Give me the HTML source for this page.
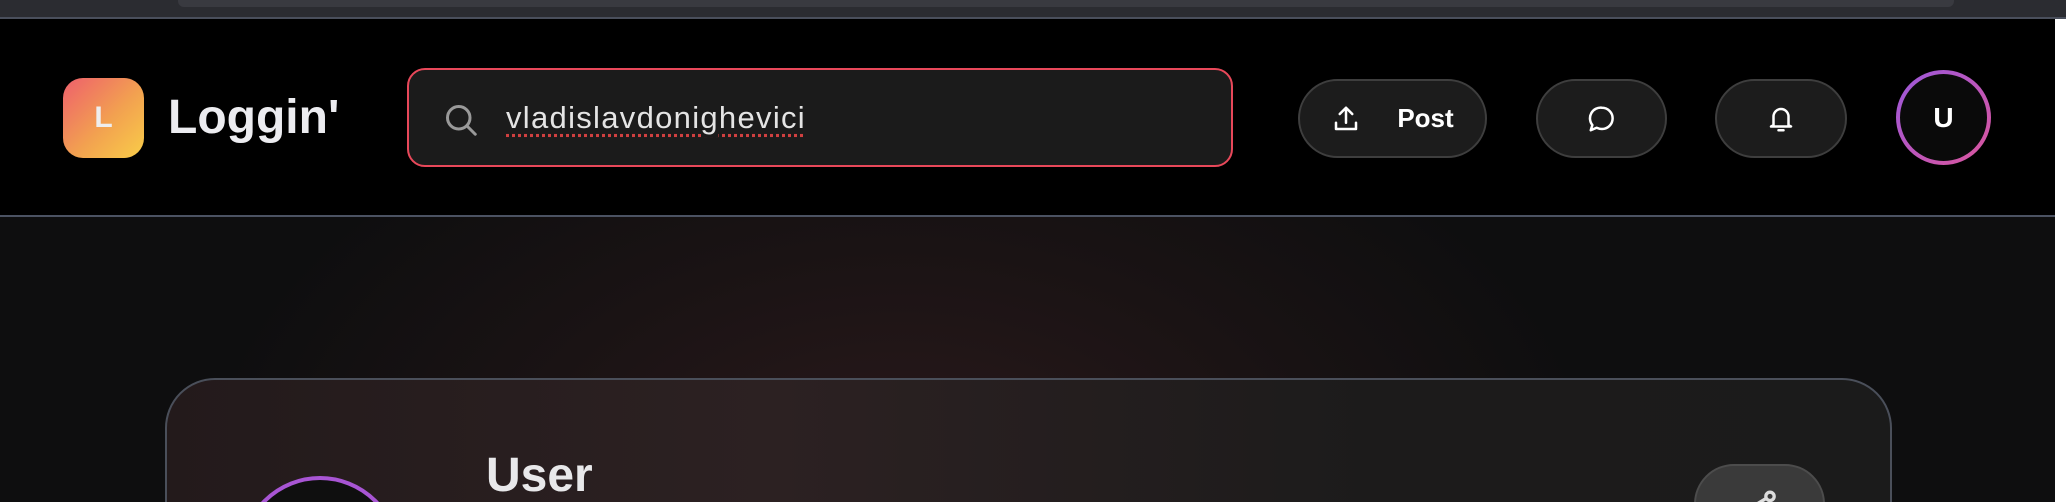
<!DOCTYPE html>
<html style="overflow:hidden;width:2066px;height:502px"><head><meta charset="utf-8"><style>
*{margin:0;padding:0;box-sizing:border-box}
body{width:2066px;height:502px;overflow:hidden;background:#0d0d0e;font-family:"Liberation Sans",sans-serif;position:relative}
.clip{position:absolute;left:0;top:0;width:2066px;height:502px;overflow:hidden}
.top{position:absolute;left:0;top:0;width:2066px;height:19px;background:#2b2c31;border-bottom:2px solid #4a4f5c}
.tab{position:absolute;left:178px;top:0;width:1776px;height:7px;background:#393a40;border-radius:0 0 6px 6px}
.hdr{position:absolute;left:0;top:19px;width:2055px;height:198px;background:#000;border-bottom:2px solid #4b5262}
.white{position:absolute;left:2055px;top:19px;width:11px;height:483px;background:#fff}
.main{position:absolute;left:0;top:217px;width:2055px;height:285px;overflow:hidden;background:radial-gradient(ellipse 700px 420px at 900px 260px,#2a191b 0%,#1a1314 55%,#0e0e0f 100%)}
.logo{position:absolute;left:63px;top:78px;width:81px;height:80px;border-radius:20px;background:linear-gradient(135deg,#ee5f6c,#f2a150 55%,#f9cd48);color:#eee;font-weight:700;font-size:30px;text-align:center;line-height:80px}
.brand{position:absolute;left:168px;top:90px;font-size:48px;font-weight:700;color:#ececf0;line-height:56px}
.search{position:absolute;left:407px;top:68px;width:826px;height:99px;border:2px solid #e8485a;border-radius:18px;background:#1b1b1b}
.stext{position:absolute;left:97px;top:30px;font-size:31px;letter-spacing:1.3px;color:#e4e4e4;text-decoration:underline dotted #d04040;text-underline-offset:6px}
.btn{position:absolute;top:79px;height:79px;border:2px solid #3e3e3e;border-radius:40px;background:#1c1c1c;display:flex;align-items:center;justify-content:center;color:#fff}
.av{position:absolute;left:1896px;top:70px;width:95px;height:95px;border-radius:50%;background:linear-gradient(135deg,#9a58dd,#dc559c);padding:4px}
.av div{width:100%;height:100%;border-radius:50%;background:#0a0a0a;color:#fff;font-weight:700;font-size:28px;text-align:center;line-height:87px}
.card{position:absolute;left:165px;top:161px;width:1727px;height:300px;border:2px solid #4a4f5a;border-radius:50px;background:linear-gradient(90deg,#231a1b,#2c2122 35%,#1c1b1b 70%,#1b1b1b)}
.user{position:absolute;left:486px;top:231px;font-size:48px;font-weight:700;color:#e8e8ea}
.cav{position:absolute;left:240px;top:259px;width:160px;height:160px;border-radius:50%;border:4px solid #a855d4;background:#0f0f0f}
.share{position:absolute;left:1694px;top:247px;width:131px;height:80px;border-radius:40px;background:#3a3a3a;border:2px solid #4c4c4c}
</style></head><body>
<div class="clip">
<div class="top"><div class="tab"></div></div>
<div class="hdr"></div>
<div class="white"></div>
<div class="main"><div class="card"></div>
<div class="user">User</div>
<div class="cav"></div>
<div class="share"><svg style="position:absolute;left:44px;top:22px" width="40" height="40" viewBox="0 0 24 24" fill="none" stroke="#ddd" stroke-width="2"><circle cx="18" cy="5" r="2.5"/><circle cx="6" cy="12" r="2.5"/><circle cx="18" cy="19" r="2.5"/><path d="M8.2 10.8l7.6-4.6M8.2 13.2l7.6 4.6"/></svg></div>
</div>
<div class="logo">L</div>
<div class="brand">Loggin'</div>
<div class="search">
<svg style="position:absolute;left:34px;top:32px" width="36" height="36" viewBox="0 0 24 24" fill="none" stroke="#999" stroke-width="2" stroke-linecap="round"><circle cx="10.5" cy="10.5" r="7.5"/><path d="M16 16l5.5 5.5"/></svg>
<div class="stext">vladislavdonighevici</div></div>
<div class="btn" style="left:1298px;width:189px"><svg width="30" height="30" viewBox="0 0 24 24" fill="none" stroke="#fff" stroke-width="2" stroke-linecap="round" stroke-linejoin="round"><path d="M12 15V3M7 8l5-5 5 5M4 15v5h16v-5"/></svg><span style="margin-left:36px;font-size:26px;font-weight:700">Post</span></div>
<div class="btn" style="left:1536px;width:131px"><svg width="30" height="30" viewBox="0 0 24 24" fill="none" stroke="#fff" stroke-width="2" stroke-linejoin="round"><path d="M12 3a8.5 8.5 0 0 1 0 17c-1.5 0-3-.4-4.3-1L3 21l1.3-4.2A8.5 8.5 0 0 1 12 3z"/></svg></div>
<div class="btn" style="left:1715px;width:132px"><svg width="30" height="30" viewBox="0 0 24 24" fill="none" stroke="#fff" stroke-width="2" stroke-linejoin="round" stroke-linecap="round"><path d="M6 17V10a6 6 0 0 1 12 0v7l2 1H4l2-1zM10 21h4"/></svg></div>
<div class="av"><div>U</div></div>
</div>
</body></html>
